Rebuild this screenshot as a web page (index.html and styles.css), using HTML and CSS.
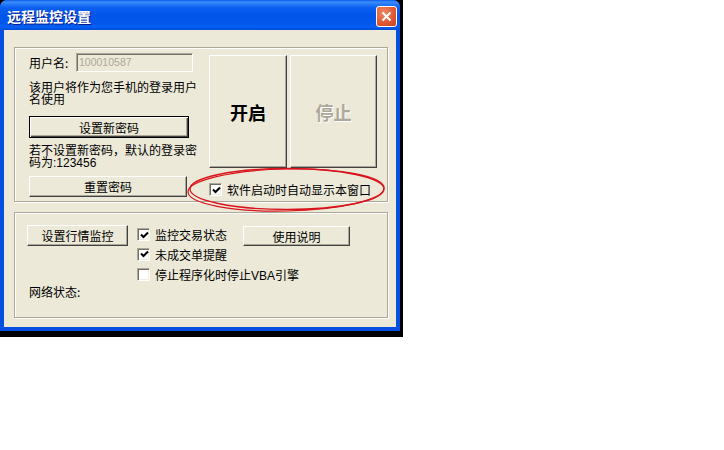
FILE: index.html
```html
<!DOCTYPE html>
<html>
<head>
    <meta charset="utf-8">
    <title>远程监控设置</title>
    <link rel="stylesheet" href="styles.css">
</head>
<body>
    <div class="desk">
        <div class="win">
            <div class="titlebar">
                <span class="title">远程监控设置</span>
                <span class="close">
                    <svg width="11" height="11" viewBox="0 0 11 11">
                        <path d="M1.5 1.5 L9.5 9.5 M9.5 1.5 L1.5 9.5" stroke="#fff" stroke-width="2" fill="none"/>
                    </svg>
                </span>
            </div>
            <div class="client">
                <!-- 用户设置 -->
                <div class="group g1">
                    <div class="leftcol">
                        <div class="userrow">
                            <span class="lbl">用户名:</span>
                            <span class="input">100010587</span>
                        </div>
                        <p class="txt t1">该用户将作为您手机的登录用户名使用</p>
                        <div class="btn default w160">设置新密码</div>
                        <p class="txt t2">若不设置新密码，默认的登录密码为:123456</p>
                        <div class="btn w158">重置密码</div>
                    </div>
                    <div class="rightcol">
                        <div class="bigrow">
                            <div class="btn big start">开启</div>
                            <div class="btn big stop">停止</div>
                        </div>
                        <div class="check autorun">
                            <span class="cb on">
                                <svg width="9" height="9" viewBox="0 0 9 9"><path d="M1 3.5 L3.5 6 L8 1.5" stroke="#000" stroke-width="2" fill="none"/></svg>
                            </span>
                            <span>软件启动时自动显示本窗口</span>
                        </div>
                    </div>
                </div>
                <!-- 监控设置 -->
                <div class="group g2">
                    <div class="opts">
                        <div class="btn quote">设置行情监控</div>
                        <div class="check">
                            <span class="cb on">
                                <svg width="9" height="9" viewBox="0 0 9 9"><path d="M1 3.5 L3.5 6 L8 1.5" stroke="#000" stroke-width="2" fill="none"/></svg>
                            </span>
                            <span>监控交易状态</span>
                        </div>
                        <div class="btn help">使用说明</div>
                        <div class="check wide">
                            <span class="cb on">
                                <svg width="9" height="9" viewBox="0 0 9 9"><path d="M1 3.5 L3.5 6 L8 1.5" stroke="#000" stroke-width="2" fill="none"/></svg>
                            </span>
                            <span>未成交单提醒</span>
                        </div>
                        <div class="check wide">
                            <span class="cb"></span>
                            <span>停止程序化时停止VBA引擎</span>
                        </div>
                    </div>
                    <div class="status">网络状态:</div>
                </div>
            </div>
            <svg class="mark" width="204" height="50" viewBox="0 0 204 50">
                <ellipse cx="102" cy="24" rx="97" ry="20.5" fill="none" stroke="#d8141c" stroke-width="1.3"/>
                <ellipse cx="101" cy="25" rx="98" ry="21" fill="none" stroke="#d8141c" stroke-width="1.2" transform="rotate(-1.2 101 25)"/>
            </svg>
        </div>
    </div>
</body>
</html>
```

FILE: styles.css
```css
body {
    margin: 0;
    background: #fff;
    font-family: "Liberation Sans", "Noto Sans CJK SC", sans-serif;
    font-size: 12px;
    color: #000;
}

.desk {
    width: 403px;
    height: 337px;
    background: #000;
}

.win {
    position: relative;
    width: 400px;
    height: 331px;
    display: flex;
    flex-direction: column;
    background: #0550e0;
    border-radius: 7px 7px 0 0;
    box-sizing: border-box;
}

.titlebar {
    height: 30px;
    flex: none;
    display: flex;
    align-items: center;
    justify-content: space-between;
    padding: 0 3px 0 7px;
    border-radius: 7px 7px 0 0;
    background: linear-gradient(#0a5ce8 0, #3b8cfa 2px, #2a7cf6 4px, #0a5ef0 8px, #0255e8 16px, #0358ec 24px, #0460f4 27px, #0048d6 30px);
}

.title {
    color: #fff;
    font-family: "Noto Sans CJK SC", sans-serif;
    font-weight: bold;
    font-size: 14px;
    text-shadow: 1px 1px 0 #0a1a8a;
    margin-top: 1px;
}

.close {
    width: 21px;
    height: 21px;
    box-sizing: border-box;
    border: 1px solid #fff;
    border-radius: 3px;
    background: radial-gradient(circle at 35% 30%, #ee8a66 0, #e05a36 55%, #c8401e 100%);
    display: flex;
    align-items: center;
    justify-content: center;
    margin-top: 2px;
}

.client {
    flex: 1;
    margin: 0 4px 4px 4px;
    background: #ece9d8;
    padding: 17px 8px 0 10px;
}

.group {
    box-sizing: border-box;
    border: 1px solid #aca899;
    box-shadow: 1px 1px 0 #fff, inset 1px 1px 0 #fff;
}

.g1 {
    height: 155px;
    display: flex;
    padding: 5px 0 0 14px;
}

.leftcol {
    width: 170px;
    flex: none;
}

.userrow {
    display: flex;
    align-items: center;
    height: 19px;
}

.lbl {
    width: 47px;
    font-family: "Noto Sans CJK SC", sans-serif;
}

.input {
    width: 117px;
    height: 19px;
    box-sizing: border-box;
    border: 1px solid;
    border-color: #aca899 #fff #fff #aca899;
    box-shadow: inset 1px 1px 0 #716f64;
    color: #aca899;
    font-size: 10.5px;
    line-height: 17px;
    padding-left: 2px;
}

.txt {
    margin: 0;
    line-height: 12px;
}

.t1 {
    margin-top: 10px;
}

.t2 {
    margin-top: 7px;
    margin-bottom: 7px;
}

.btn {
    box-sizing: border-box;
    display: flex;
    align-items: center;
    justify-content: center;
    border: 1px solid;
    border-color: #fff #404040 #404040 #fff;
    box-shadow: inset -1px -1px 0 #aca899;
    background: #ece9d8;
    font-family: "Noto Sans CJK SC", sans-serif;
}

.btn.default {
    border: 1px solid #000;
    box-shadow: inset 1px 1px 0 #fff, inset -1px -1px 0 #404040, inset -2px -2px 0 #aca899;
}

.w160 {
    width: 160px;
    height: 22px;
    margin-top: 10px;
}

.w158 {
    width: 158px;
    height: 21px;
}

.rightcol {
    margin: 2px 0 0 10px;
}

.bigrow {
    display: flex;
    gap: 3px;
}

.big {
    height: 113px;
    font-size: 18px;
    font-weight: bold;
}

.start {
    width: 78px;
}

.stop {
    width: 87px;
    color: #aca899;
    text-shadow: 1px 1px 0 #fff;
}

.check {
    display: flex;
    align-items: center;
    gap: 5px;
    font-family: "Liberation Sans", "Noto Sans CJK SC", sans-serif;
}

.autorun {
    margin-top: 13px;
}

.cb {
    width: 13px;
    height: 13px;
    flex: none;
    box-sizing: border-box;
    border: 1px solid;
    border-color: #aca899 #fff #fff #aca899;
    box-shadow: inset 1px 1px 0 #716f64, inset -1px -1px 0 #f1efe2;
    background: #fff;
    display: flex;
    align-items: center;
    justify-content: center;
    padding: 1px 0 0 1px;
}

.g2 {
    height: 106px;
    margin-top: 10px;
    padding: 12px 0 0 12px;
}

.opts {
    display: grid;
    grid-template-columns: 110px 106px 107px;
    grid-template-rows: 19px 20px 20px;
}

.quote {
    width: 101px;
    height: 21px;
}

.help {
    height: 20px;
    margin-top: 1px;
}

.wide {
    grid-column: 2 / 4;
}

.status {
    margin: 2px 0 0 2px;
    line-height: 12px;
    font-family: "Noto Sans CJK SC", sans-serif;
}

.mark {
    position: absolute;
    left: 185px;
    top: 165px;
}
```
